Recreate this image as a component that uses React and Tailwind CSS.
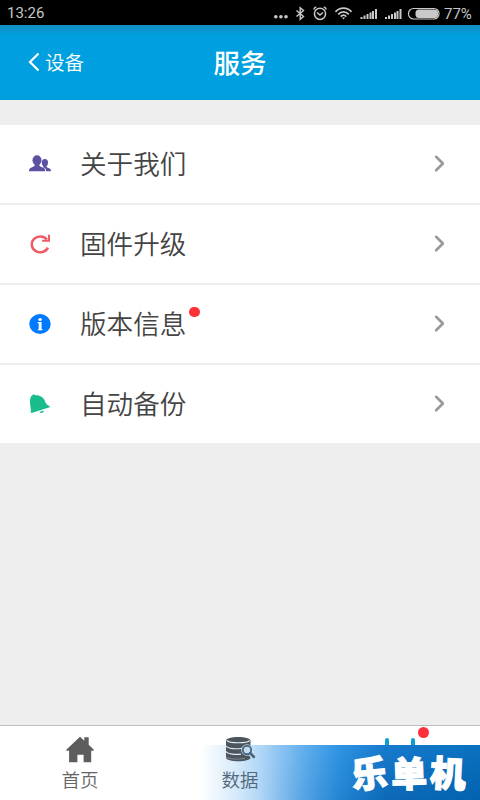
import { ChevronRight } from 'lucide-react'

function UsersIcon() {
  return (
    <svg width="22" height="17" viewBox="0 0 22 17" fill="#5b51a0">
      <ellipse cx="8" cy="5.200" rx="4.500" ry="4.900" />
      <path d="M5.500 8h5v3c.8.9 4.600 1.300 5.400 3 .3.600.3 1.300.3 2.200H0c0-.9 0-1.600.4-2.200 1-1.700 4.300-2.100 5.100-3z" />
      <ellipse cx="15.900" cy="7.700" rx="3.100" ry="3.600" />
      <path d="M14.200 9.500h3.400V12c.6.700 3.200 1 3.800 2.100.4.600.5 1.300.5 2.100h-4.700c0-1.900-.9-3.200-3-3.900z" />
    </svg>
  )
}

function RefreshIcon() {
  return (
    <svg width="22" height="20" viewBox="0 0 22 20" fill="none" stroke="#ef5b67">
      <path d="M19 13.600A8.500 7.900 0 1 1 18 5.500" strokeWidth="2.500" />
      <path d="M20 .8v6h-7" strokeWidth="2" />
    </svg>
  )
}

function InfoIcon() {
  return (
    <svg width="22" height="20" viewBox="0 0 22 20">
      <ellipse cx="11" cy="10" rx="10.700" ry="10" fill="#007aff" />
      <ellipse cx="11.100" cy="5.400" rx="1.800" ry="1.500" fill="#fff" />
      <path d="M8.600 8h4v7h.8v1.200H8.900V15h.8V9.200H8.600z" fill="#fff" />
    </svg>
  )
}

function BellIcon() {
  return (
    <svg width="22" height="20" viewBox="0 0 22 20" fill="#1bbc8b">
      <path d="M2 2.500L4.500.3l2 1C11 1 15 3.800 16.200 7.500c.6 1.900 1 3 4.500 4.700v1L2.600 19l-.9-.8C2.300 14.500 1 12 1 8.500 1 6 1.200 4 2 2.500z" />
      <path d="M10.200 18l4.800-1.500c-.1 1.200-.8 1.900-2 2.300-1.100.3-2.100 0-2.800-.8z" />
    </svg>
  )
}

function HomeIcon() {
  return (
    <svg width="28" height="27" viewBox="0 0 28 27" fill="#5d5d5d">
      <path d="M14 .8l4.300 4V1.200h4.400v7.600l4.900 4.800c.4.500.1 1.100-.5 1.100h-1.900v11.600h-7.600v-7.500h-6.200v7.500H3.100V14.700H1c-.7 0-.9-.6-.5-1.100z" />
    </svg>
  )
}

function DatabaseIcon() {
  return (
    <svg width="32" height="27" viewBox="0 0 32 27">
      <path d="M2 4.500C2 -.3 26.500-.3 26.500 4.500v17c0 5-24.500 5-24.500 0z" fill="#4c545c" />
      <g fill="none" stroke="#e2eff9" strokeWidth="1.100">
        <path d="M2.800 4.300c2.500 3.200 20.500 3.200 23 0" />
        <path d="M2 10c2 2.900 11 3.300 16 2.200" />
        <path d="M2 15.500c2 2.900 10 3.300 15 2.600" />
        <path d="M2 20.800c2 2.400 12 2.900 19 1.500" stroke="#9fb3c3" strokeWidth=".6" />
      </g>
      <circle cx="23" cy="14" r="5.800" fill="#d9ebf9" />
      <path d="M26 17.500l3 3" stroke="#d9ebf9" strokeWidth="4.500" />
      <circle cx="23" cy="14" r="4.200" fill="#c3dcf0" stroke="#476783" strokeWidth="1.900" />
      <path d="M26.300 17.300l3.400 3.400" stroke="#476783" strokeWidth="3" strokeLinecap="round" />
    </svg>
  )
}

function StatusIcons() {
  return (
    <svg width="168" height="24" viewBox="272 0 168 24" fill="none" stroke="#c9c9c9">
      <g fill="#c9c9c9" stroke="none">
        <circle cx="275.800" cy="15.700" r="1.800" />
        <circle cx="280.900" cy="15.700" r="1.800" />
        <circle cx="286" cy="15.700" r="1.800" />
        <path d="M360.500 18v-2h2v2zM363.500 18v-3.500h2V18zM366.500 18v-5h2v5zM369.500 18v-6.500h2V18zM372 18V10h2v8zM375 18V8h2v10z" />
        <path d="M385 18v-2h2v2zM388 18v-3.500h2V18zM391 18v-5h2v5zM394 18v-6.500h2V18zM396.500 18V10h2v8zM399.500 18V8h2v10z" />
        <rect x="415.500" y="8.500" width="22.500" height="8.500" rx="3.500" />
      </g>
      <path d="M296.500 9.500l7 6-3.300 2.700V6.800l3.300 2.700-7 6" strokeWidth="1.400" />
      <circle cx="320" cy="12.800" r="5.600" strokeWidth="1.500" />
      <path d="M317 11.500l3 2.500 3-2.500M313.800 8.500c.4-1.600 1.200-2.300 2.500-2.600M326.200 8.500c-.4-1.600-1.200-2.300-2.500-2.600" strokeWidth="1.400" />
      <path d="M335.500 10.800c4.500-4.800 11.500-4.800 16 0M338.200 13.300c3-3.200 7.600-3.200 10.600 0M340.700 15.600c1.700-1.700 3.900-1.700 5.600 0" strokeWidth="1.700" />
      <path d="M341.900 16.500h3.200l-1.600 1.900z" fill="#c9c9c9" stroke="none" />
      <rect x="408.500" y="7.500" width="30.500" height="10.500" rx="5" strokeWidth="1.200" />
    </svg>
  )
}

const rows = [
  { label: '关于我们', icon: UsersIcon },
  { label: '固件升级', icon: RefreshIcon },
  { label: '版本信息', icon: InfoIcon, badge: true },
  { label: '自动备份', icon: BellIcon },
]

function StatusBar() {
  return (
    <div className="flex h-[25px] shrink-0 items-center bg-black pl-[7px] font-[Roboto,sans-serif] text-[#c6c6c6]">
      <span className="pt-[2px] text-[15px] leading-none">13:26</span>
      <div className="ml-auto flex items-center pr-2">
        <StatusIcons />
        <span className="ml-1 w-7 pt-[3px] text-[15px] leading-none whitespace-nowrap">77%</span>
      </div>
    </div>
  )
}

function Header() {
  return (
    <header className="grid h-[75px] shrink-0 grid-cols-3 items-center bg-linear-to-b from-[#128dbd] to-[#009fe0] to-[10px] text-white">
      <button type="button" className="flex items-center pb-px pl-[28px]">
        <svg width="12" height="20" viewBox="0 0 12 20" fill="none" stroke="currentColor" strokeWidth="2.200">
          <path d="M10.500 1.500L2 10l8.500 8.500" />
        </svg>
        <span className="ml-[5px] text-[19.500px] leading-none font-[350]">设备</span>
      </button>
      <h1 className="text-center text-[26.500px] leading-none font-medium">服务</h1>
    </header>
  )
}

function Row({ label, icon: Icon, badge }) {
  return (
    <li className="flex h-[78px] items-center bg-white pr-[27px] pb-[2px] pl-[29px]">
      <span className="flex w-[51px] items-center pt-px">
        <Icon />
      </span>
      <span className="relative text-[26.600px] leading-none font-[350] text-[#444]">
        {label}
        {badge && <span className="absolute top-[-3px] -right-[14px] h-[10px] w-[11px] rounded-full bg-[#fb3038]" />}
      </span>
      <ChevronRight size={27} strokeWidth={2.300} className="ml-auto text-[#999]" />
    </li>
  )
}

function TabBar() {
  return (
    <nav className="relative grid h-[75px] shrink-0 grid-cols-3 border-t border-[#bdbdbd] bg-white text-[18.500px] font-[350] text-[#666]">
      <div className="absolute right-0 bottom-0 h-[55px] w-[280px] bg-[linear-gradient(90deg,#fff_0%,#d9ecfb_12%,#a5d1f5_24%,#5eaeed_38%,#2e94e4_50%,#1579cb_66%,#066fbd_100%)]" />
      <div className="absolute right-0 bottom-0 h-[55px] w-[220px] bg-linear-to-b from-[#3b9cf010] to-[#004e9860] mask-l-from-40%" />
      <div className="relative flex flex-col items-center pt-[10px]">
        <HomeIcon />
        <span className="mt-[7px] leading-none">首页</span>
      </div>
      <div className="relative flex flex-col items-center pt-[10px]">
        <DatabaseIcon />
        <span className="mt-[7px] leading-none text-[#52687a]">数据</span>
      </div>
      <div className="relative">
        <span className="absolute top-[12px] left-[65px] h-[7px] w-1 rounded-t-full bg-[#0fa0d2]" />
        <span className="absolute top-[12px] left-[91px] h-[7px] w-1 rounded-t-full bg-[#0fa0d2]" />
        <span className="absolute top-[1px] left-[98px] size-[11px] rounded-full bg-[#fb3038]" />
        <div className="absolute top-[20px] left-[31px] flex text-[36px] leading-[50px] font-black text-white [-webkit-text-stroke:1.200px_white]">
          <span className="w-[40px] -rotate-6">乐</span>
          <span className="w-[39px] -rotate-2">单</span>
          <span className="w-[40px] rotate-3">机</span>
        </div>
      </div>
    </nav>
  )
}

export default function App() {
  return (
    <div className="flex h-[800px] w-[480px] flex-col overflow-hidden bg-[#eee] font-['Noto_Sans_CJK_SC',sans-serif]">
      <StatusBar />
      <Header />
      <ul className="mt-[25px] flex flex-1 flex-col gap-[2px]">
        {rows.map((row) => (
          <Row key={row.label} {...row} />
        ))}
      </ul>
      <TabBar />
    </div>
  )
}
